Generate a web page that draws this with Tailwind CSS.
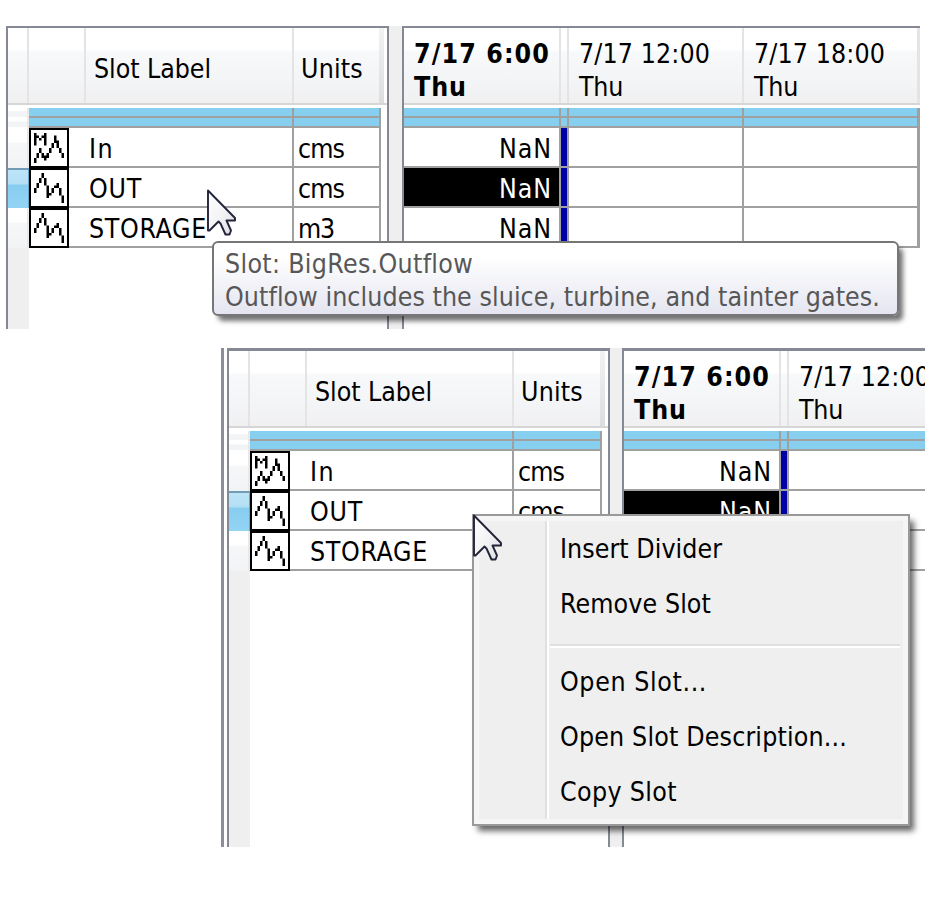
<!DOCTYPE html>
<html lang="en">
<head>
<meta charset="utf-8">
<title>Slot table</title>
<script src="https://cdn.jsdelivr.net/npm/@tailwindcss/browser@4"></script>
</head>
<body class="bg-white">
<main id="page" class="relative w-[942px] h-[905px] overflow-hidden bg-white text-black text-[26.5px] leading-[33px] font-['DejaVu_Sans_Condensed','DejaVu_Sans',sans-serif] [font-stretch:condensed]"></main>
<script>
// A text run fitted to the given advance width.
const t = (s, w) => `<span class="inline-block whitespace-pre" data-w="${w}">${s}</span>`;

const multi = 'M2 2h1v5h-1zM6 2h1v5h-1zM3 3h1v1h-1zM5 3h1v1h-1zM4 4h1v1h-1zM2 12h1v2h-1zM3 10h1v2h-1zM4 8h1v2h-1zM5 10h1v2h-1zM6 11h1v2h-1zM7 10h1v2h-1zM8 8h1v2h-1zM9 6h1v2h-1zM10 3h1v3h-1zM11 5h1v3h-1zM12 8h1v2h-1zM13 10h1v2h-1z';
const single = 'M2 8h1v2h-1zM3 6h1v2h-1zM4 4h1v2h-1zM5 2h1v2h-1zM6 4h1v3h-1zM7 7h1v2h-1zM7 9h1v3h-1zM8 10h1v1h-1zM9 8h1v2h-1zM10 7h1v1h-1zM11 6h1v2h-1zM12 8h1v3h-1zM13 11h1v3h-1z';
const icon = d => `<svg class="block w-10 h-10 shrink-0" viewBox="0 0 16 16"><rect x=".4" y=".4" width="15.2" height="15.2" fill="#fff" stroke="#000" stroke-width=".8"/><path d="${d}"/></svg>`;

const hbg = 'bg-[linear-gradient(to_bottom,#fff_0,#fff_22px,#f8f9fb_23px,#f4f5f7_50px,#f0f0f1_100%)]';
const hb = 'border-r-2 border-[#e4e4e5]';

const stripes = cells => `
  <div class="flex h-2">${cells}</div><div class="h-0.5 bg-[#a0a0a0]"></div>
  <div class="flex h-2">${cells}</div><div class="h-0.5 bg-[#a0a0a0]"></div>`;

function leftPane(o) {
  const rows = [['In', 25, 'cms', 46, multi], ['OUT', 53, 'cms', 46, single], ['STORAGE', 118, 'm3', 36, single]];
  const rowHead = i => i === 1
    ? `<div class="w-[21px] h-10 shrink-0 border-t-2 border-[#6f9db5] bg-[linear-gradient(to_bottom,#bde4f7_0,#b3dff5_14px,#87cdf0_15px,#93d4f4_100%)] border-r border-r-[#6aa9c8]"></div>`
    : `<div class="w-[21px] h-10 shrink-0 border-r-2 border-[#e9e9ea] bg-[linear-gradient(to_bottom,#fff_0,#fff_14px,#f6f7f9_15px,#f2f3f4_100%)]"></div>`;
  return `<div class="shrink-0 flex flex-col bg-white border-x-2 border-[#858993]" style="width:${o.leftW}px;border-top:${o.top}px solid #858993">
    <div class="flex h-[75px] ${hbg}">
      <div class="w-[21px] shrink-0 ${hb}"></div>
      <div class="w-[57px] shrink-0 ${hb}"></div>
      <div class="shrink-0 pl-2 pt-[24px] ${hb}" style="width:${o.labelW - 18}px">${t('Slot Label', 117)}</div>
      <div class="shrink-0 pl-[7px] pt-[24px]" style="width:${o.unitsW}px">${t('Units', 62)}</div>
      <div class="w-[5px] bg-[linear-gradient(to_bottom,#f2f2f2,#dcdddf)]"></div>
      <div class="flex-1 bg-white"></div>
    </div>
    <div class="h-0.5 bg-[#d6d6d6]"></div><div class="h-[3px]"></div>
    <div class="flex">
      <div class="w-[21px] shrink-0 border-r-2 border-[#e9e9ea]"><div class="h-[9px] bg-[linear-gradient(to_bottom,#fff_30%,#f3f4f6_40%)]"></div><div class="h-[2px]"></div><div class="h-[8px] bg-[linear-gradient(to_bottom,#fff_20%,#f3f4f6_40%)]"></div></div>
      <div class="w-[352px] shrink-0">${stripes(`<div class="bg-[#87cfef] border-r-2 border-[#a0a0a0]" style="width:${o.labelW + 39}px"></div><div class="flex-1 bg-[#87cfef] border-r-2 border-[#a0a0a0]"></div>`)}</div>
    </div>
    ${rows.map((r, i) => `<div class="flex h-10">${rowHead(i)}${icon(r[4])}
      <div class="flex w-[312px] shrink-0 border-b-2 border-[#a0a0a0]">
        <div class="pt-[4px] pl-5 border-r-2 border-[#a0a0a0] shrink-0" style="width:${o.labelW - 1}px">${t(r[0], r[1])}</div>
        <div class="pt-[4px] pl-1 flex-1 border-r-2 border-[#a0a0a0]">${t(r[2], r[3])}</div>
      </div></div>`).join('')}
    <div class="w-[21px] flex-1 bg-[#efefef]"></div>
  </div>`;
}

function rightPane(o) {
  const cell = 'bg-[#87cfef] shrink-0 border-r-2 border-[#a0a0a0]';
  return `<div class="flex-1 min-w-0 overflow-hidden bg-white border-l-2 border-[#858993]" style="border-top:${o.top}px solid #858993">
    <div class="w-[516px]">
    <div class="flex h-[75px] ${hbg}">
      <div class="w-[157px] shrink-0 pl-[10px] pt-[9px] font-bold ${hb}">${t('7/17 6:00', 136)}<br>${t('Thu', 53)}</div>
      <div class="w-2 shrink-0 ${hb}"></div>
      <div class="w-[175px] shrink-0 pl-[10px] pt-[9px] ${hb}">${t('7/17 12:00', 131)}<br>${t('Thu', 44)}</div>
      <div class="w-[176px] shrink-0 pl-[10px] pt-[9px] border-r-[3px] border-[#e4e4e5]">${t('7/17 18:00', 131)}<br>${t('Thu', 44)}</div>
    </div>
    <div class="h-0.5 bg-[#d6d6d6]"></div><div class="h-[3px]"></div>
    ${stripes(`<div class="w-[157px] ${cell}"></div><div class="w-2 ${cell}"></div><div class="w-[175px] ${cell}"></div><div class="flex-1 bg-[#87cfef] border-r-[3px] border-[#a0a0a0]"></div>`)}
    ${[0, 1, 2].map(i => `<div class="flex h-10 border-b-2 border-[#a0a0a0]">
      <div class="w-[157px] shrink-0 pt-[4px] pr-[7px] text-right border-r-2 border-[#a0a0a0] ${i === 1 ? 'bg-black text-white' : ''}">${t('NaN', 53)}</div>
      <div class="w-2 shrink-0 bg-[#0000a6] border-r-2 border-[#a0a0a0]"></div>
      <div class="w-[175px] shrink-0 border-r-2 border-[#a0a0a0]"></div>
      <div class="flex-1 border-r-[3px] border-[#a0a0a0]"></div></div>`).join('')}
    </div>
  </div>`;
}

const table = o => `<section class="flex overflow-hidden" style="margin-left:${o.x}px;width:${o.w}px;height:${o.h}px">
  ${leftPane(o)}<div class="shrink-0 bg-[#efefef]" style="width:${o.split}px"></div>${rightPane(o)}</section>`;

const cursor = pos => `<svg class="absolute ${pos} w-[34px] h-[52px]" viewBox="-2 -2 34 52"><defs><linearGradient id="cg" x2="1" y2="1"><stop offset="0" stop-color="#fff"/><stop offset=".5" stop-color="#f4f4f6"/><stop offset="1" stop-color="#dcdde2"/></linearGradient></defs><path d="M1 1.5 28 29V31.5H19.5L24 41.5 22.500 45.500H18.500L13.500 34.500 11.500 32.500 2.500 41.500H1Z" fill="url(#cg)" stroke="#23243a" stroke-width="1.9" stroke-linejoin="round"/></svg>`;

const item = (s, w, pt = 'pt-[9px]') => `<div class="h-[55px] ${pt} pl-[11px]">${t(s, w)}</div>`;

document.getElementById('page').innerHTML = `
<div class="pt-[26px]">${table({x: 6, w: 914, h: 303, top: 2, leftW: 383, labelW: 226, unitsW: 85, split: 13})}</div>
<div class="flex pt-[19px]"><div class="ml-[221px] -mr-[224px] w-[3px] h-[499px] bg-[#8b8f9b]"></div>
${table({x: 227, w: 698, h: 499, top: 3, leftW: 383, labelW: 225, unitsW: 86, split: 12})}</div>
${cursor('left-[205px] top-[187px]')}
<div class="absolute left-[212px] top-[241px] w-[687px] h-[75px] rounded-[6px] border-2 border-[#767676] bg-[linear-gradient(to_bottom,#fff_20%,#e4e5f0)] shadow-[5px_6px_5px_-1px_rgba(0,0,0,0.55)] pl-[11px] pt-[4px] text-[#575757]">${t('Slot: BigRes.Outflow', 248)}<br>${t('Outflow includes the sluice, turbine, and tainter gates.', 655)}</div>
<div class="absolute left-[472px] top-[514px] w-[438px] h-[312px] flex border-2 border-[#999] bg-[#f5f5f5] p-[5px] shadow-[5px_6px_6px_-1px_rgba(0,0,0,0.6)]">
  <div class="w-[66px] shrink-0 bg-[#efefef]"></div><div class="w-0.5 shrink-0 bg-[#e0e0e0]"></div><div class="w-0.5 shrink-0 bg-white"></div>
  <div class="flex-1 min-w-0 bg-[#efefef]">${item('Insert Divider', 162, 'pt-[11px]')}${item('Remove Slot', 151, 'pt-[11px]')}
    <div class="mt-[13px] mb-[8px] ml-px mr-[3px] h-1 border-t-2 border-b-2 border-t-[#dfdfdf] border-b-white"></div>
    ${item('Open Slot...', 147)}${item('Open Slot Description...', 287)}${item('Copy Slot', 117)}</div>
</div>
${cursor('left-[471px] top-[512px]')}`;

function fit() {
  const runs = [...document.querySelectorAll('[data-w]')];
  for (const e of runs) e.style.letterSpacing = '0px';
  for (const e of runs) {
    e.style.letterSpacing = (e.dataset.w - e.getBoundingClientRect().width) / e.textContent.length + 'px';
  }
}
fit();
addEventListener('load', fit);
document.fonts.ready.then(fit);
requestAnimationFrame(fit);
</script>
</body>
</html>
